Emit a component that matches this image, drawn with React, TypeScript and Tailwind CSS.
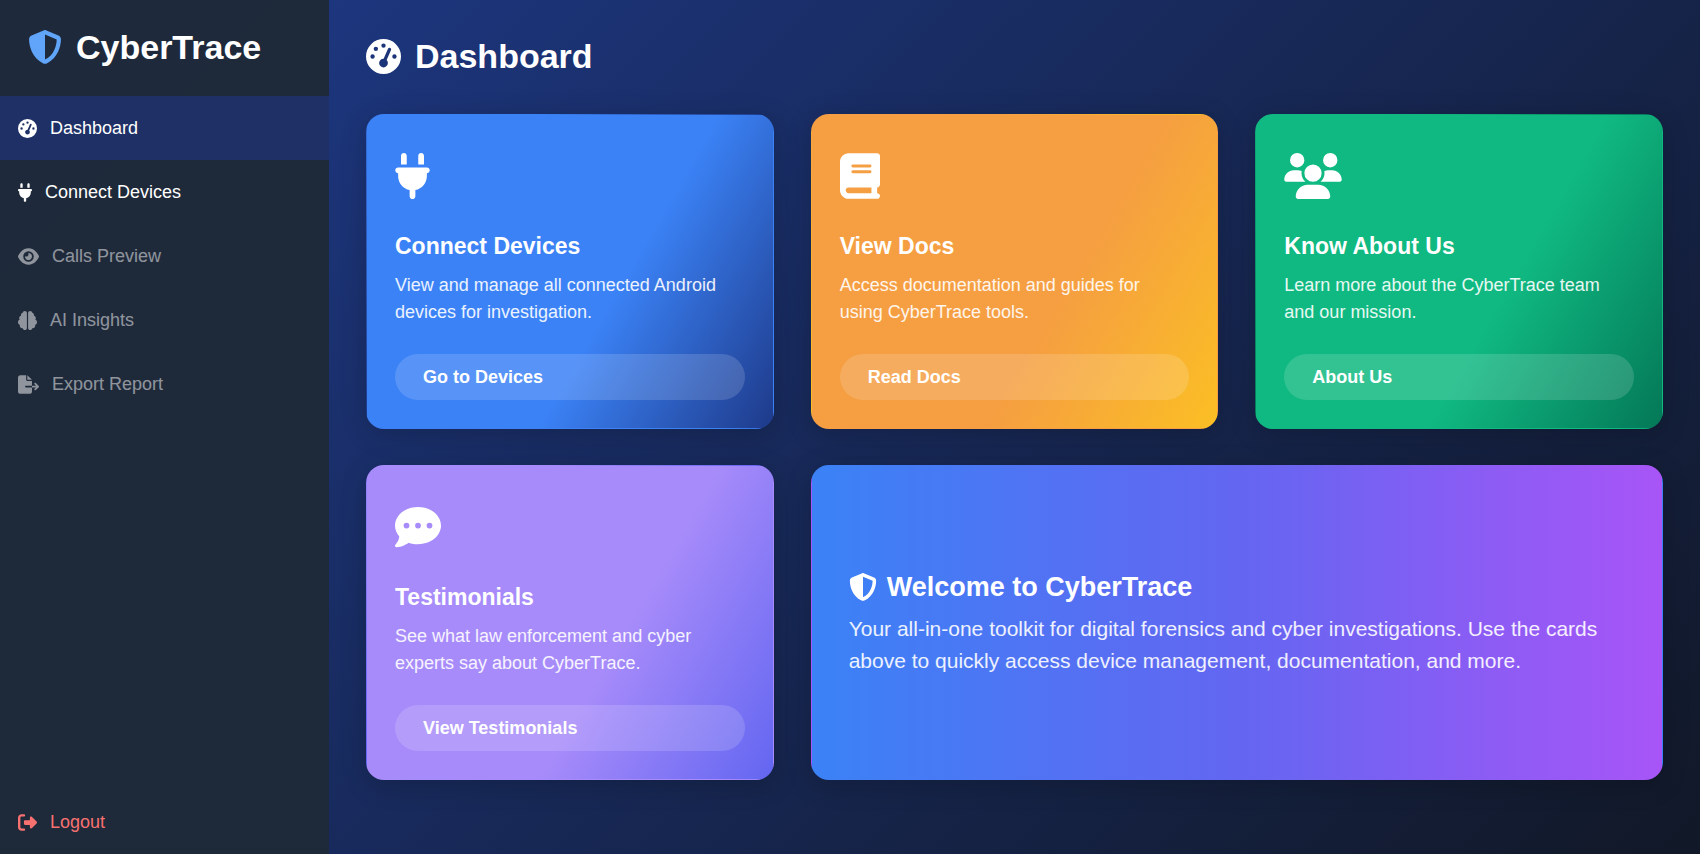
import type { IconType } from "react-icons";
import {
  FaBook,
  FaBrain,
  FaCommentDots,
  FaEye,
  FaFileExport,
  FaGaugeHigh,
  FaPlug,
  FaRightFromBracket,
  FaShieldHalved,
  FaUsers,
} from "react-icons/fa6";

type NavItem = { label: string; icon: IconType; iconWidth: string; state: string };

const navItems: NavItem[] = [
  { label: "Dashboard", icon: FaGaugeHigh, iconWidth: "w-[19px]", state: "bg-[#1e3065] text-white" },
  { label: "Connect Devices", icon: FaPlug, iconWidth: "w-[14px]", state: "text-white" },
  { label: "Calls Preview", icon: FaEye, iconWidth: "w-[21px]", state: "text-white opacity-50" },
  { label: "AI Insights", icon: FaBrain, iconWidth: "w-[19px]", state: "text-white opacity-50" },
  { label: "Export Report", icon: FaFileExport, iconWidth: "w-[21px]", state: "text-white opacity-50" },
];

type CardInfo = {
  title: string;
  text: string;
  action: string;
  icon: IconType;
  iconWidth: string;
  fill: string;
};

const cards: CardInfo[] = [
  {
    title: "Connect Devices",
    text: "View and manage all connected Android devices for investigation.",
    action: "Go to Devices",
    icon: FaPlug,
    iconWidth: "w-[35px]",
    fill: "bg-[linear-gradient(120deg,#3b82f6_60%,#1e3a8a_100%)]",
  },
  {
    title: "View Docs",
    text: "Access documentation and guides for using CyberTrace tools.",
    action: "Read Docs",
    icon: FaBook,
    iconWidth: "w-[40px]",
    fill: "bg-[linear-gradient(120deg,#f59e42_60%,#fbbf24_100%)]",
  },
  {
    title: "Know About Us",
    text: "Learn more about the CyberTrace team and our mission.",
    action: "About Us",
    icon: FaUsers,
    iconWidth: "w-[58px]",
    fill: "bg-[linear-gradient(120deg,#10b981_60%,#047857_100%)]",
  },
  {
    title: "Testimonials",
    text: "See what law enforcement and cyber experts say about CyberTrace.",
    action: "View Testimonials",
    icon: FaCommentDots,
    iconWidth: "w-[46px]",
    fill: "bg-[linear-gradient(120deg,#a78bfa_60%,#6366f1_100%)]",
  },
];

const panel = "rounded-[18px] border border-transparent shadow-[0_5px_27px_rgba(0,0,0,0.18)]";

function NavLink({ label, icon: Icon, iconWidth, state }: NavItem) {
  return (
    <a href="#" className={`flex h-16 items-center gap-[13px] px-[18px] text-[18px] ${state}`}>
      <Icon className={`h-[19px] ${iconWidth}`} />
      {label}
    </a>
  );
}

function Card({ title, text, action, icon: Icon, iconWidth, fill }: CardInfo) {
  return (
    <article className={`flex flex-col p-7 ${panel} ${fill}`}>
      <Icon className={`mt-[10px] h-[46px] ${iconWidth}`} />
      <h2 className="mt-[31px] text-[23px] leading-8 font-bold">{title}</h2>
      <p className="mt-[10px] pr-2 text-[18px] leading-[27px] text-white/90">{text}</p>
      <a
        href="#"
        className="mt-7 flex h-[46px] items-center rounded-full bg-white/15 px-7 text-[18px] font-bold"
      >
        {action}
      </a>
    </article>
  );
}

export default function App() {
  return (
    <div className="flex min-h-screen bg-[linear-gradient(135deg,#1e3a8a,#111827)] font-['Liberation_Sans',Arial,sans-serif] text-white">
      <aside className="flex w-[329px] shrink-0 flex-col bg-[#1f2937]/95">
        <div className="flex h-24 items-center gap-[14px] px-7 pb-0.5 text-[34px] font-bold">
          <FaShieldHalved className="size-[34px] text-[#60a5fa]" />
          CyberTrace
        </div>
        <nav className="flex flex-col">
          {navItems.map((item) => (
            <NavLink key={item.label} {...item} />
          ))}
        </nav>
        <div className="mt-auto">
          <NavLink
            label="Logout"
            icon={FaRightFromBracket}
            iconWidth="w-[19px]"
            state="text-[#f87171]"
          />
        </div>
      </aside>

      <main className="flex-1 px-[37px] py-9">
        <h1 className="flex items-center gap-[14px] text-[34px] leading-10 font-bold">
          <FaGaugeHigh className="size-[35px]" />
          Dashboard
        </h1>
        <div className="mt-[38px] grid grid-cols-3 gap-x-[37px] gap-y-9">
          {cards.map((card) => (
            <Card key={card.title} {...card} />
          ))}
          <section
            className={`col-span-2 flex flex-col justify-center px-[37px] ${panel} bg-[linear-gradient(90deg,#3b82f6,#6366f1,#a855f7)]`}
          >
            <h2 className="flex items-center gap-[10px] text-[27px] leading-9 font-bold">
              <FaShieldHalved className="size-7" />
              Welcome to CyberTrace
            </h2>
            <p className="mt-2 text-[21px] leading-8 text-white/90">
              Your all-in-one toolkit for digital forensics and cyber investigations. Use the cards above to
              quickly access device management, documentation, and more.
            </p>
          </section>
        </div>
      </main>
    </div>
  );
}
